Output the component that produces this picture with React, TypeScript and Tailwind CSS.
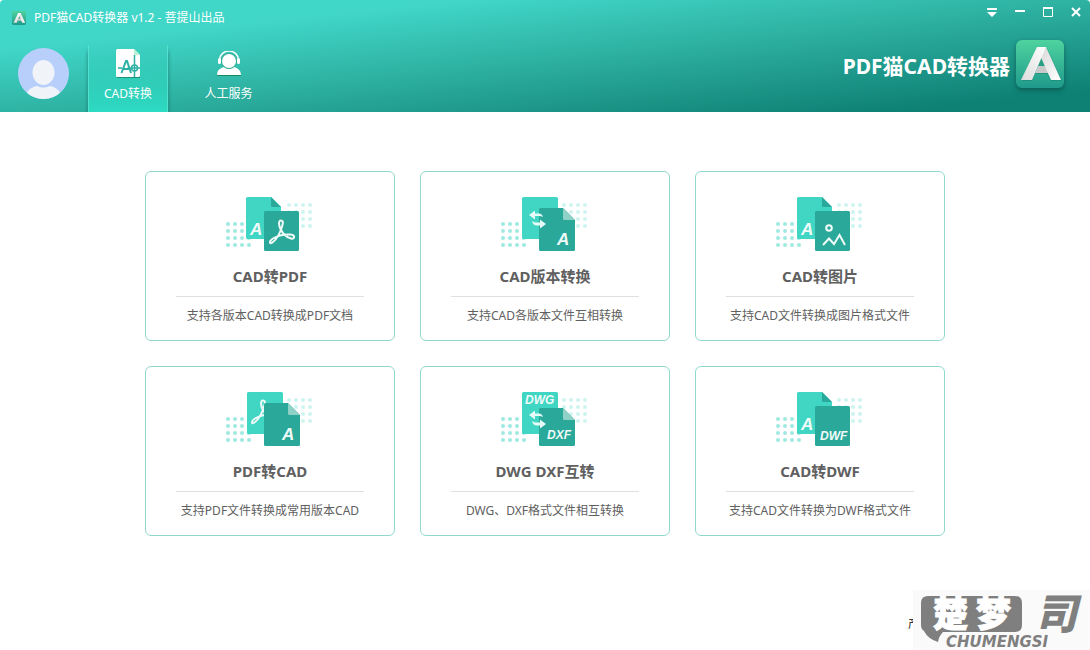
import type { ReactNode } from "react";

const LIGHT = "#40d6c3";
const DARK = "#2aa899";

function AppMark({ className }: { className?: string }) {
  return (
    <svg viewBox="0 0 48 48" className={className} aria-hidden="true">
      <defs>
        <linearGradient id="markBg" x1="0" y1="0" x2="0" y2="1">
          <stop offset="0" stopColor="#4fd39f" />
          <stop offset="1" stopColor="#1f9a8b" />
        </linearGradient>
        <linearGradient id="markLeft" x1="1" y1="0" x2="0" y2="1">
          <stop offset="0" stopColor="#ffffff" />
          <stop offset="1" stopColor="#dcdcdc" />
        </linearGradient>
        <linearGradient id="markRight" x1="0" y1="0" x2="1" y2="1">
          <stop offset="0" stopColor="#d5d5d5" />
          <stop offset="1" stopColor="#ffffff" />
        </linearGradient>
      </defs>
      <rect width="48" height="48" rx="5" fill="url(#markBg)" />
      <path d="M6 41 L21 8 H31 L46 41 H35 L31 34 H19 L16 41 Z" fill="#0c6b60" opacity="0.3" />
      <path d="M19 33 L22 26 H31 L34 33 Z" fill="#c9c9c9" />
      <path d="M21 7 H30 L45 40 H35 L23 13 Z" fill="url(#markRight)" />
      <path d="M21 7 H30 L16 40 H5 Z" fill="url(#markLeft)" />
    </svg>
  );
}

function Avatar() {
  return (
    <svg viewBox="0 0 51 51" className="size-[51px]" aria-hidden="true">
      <defs>
        <clipPath id="avatarClip">
          <circle cx="25.5" cy="25.5" r="25.5" />
        </clipPath>
      </defs>
      <g clipPath="url(#avatarClip)">
        <rect width="51" height="51" fill="#b9cffb" />
        <ellipse cx="25.5" cy="24.5" rx="11" ry="12.5" fill="#f0f4f8" />
        <path d="M7 51 C8 42 14 39 19 38 Q25.500 41 32 38 C37 39 43 42 44 51 Z" fill="#f0f4f8" />
      </g>
    </svg>
  );
}

function CadFileIcon() {
  return (
    <svg viewBox="0 0 24 30" className="h-[30px] w-6" aria-hidden="true">
      <path d="M1 2 H18 L24 8 V29 H1 Z" fill="#1e8f70" />
      <path d="M0 1.500 Q0 0 1.500 0 H18 L24 6 V26.500 Q24 28 22.500 28 H1.500 Q0 28 0 26.500 Z" fill="#fff" />
      <path d="M18 0 L24 6 H18 Z" fill="#b5f2cf" />
      <g fill="none" stroke="#2fb0a4">
        <path d="M2 19 H6 M11.500 19 H24 M18.500 6 V28" strokeWidth="1.500" />
        <path d="M5.500 24 L10 12 H11 L15 24 M7.500 20 H13.500" strokeWidth="2" />
        <circle cx="18.500" cy="19" r="3" strokeWidth="1.500" />
      </g>
    </svg>
  );
}

function ServiceIcon() {
  const body = "M0 24 C0 18 5 17 8 15.500 Q12 20 16 15.500 C19 17 24 18 24 24 Z";
  return (
    <svg viewBox="0 0 24 26" className="h-[26px] w-6" aria-hidden="true">
      <path d={body} transform="translate(0 1)" fill="#178a62" />
      <path d={body} fill="#fff" />
      <circle cx="12" cy="10" r="8" fill="#2fae96" />
      <circle cx="12" cy="10" r="7" fill="#fff" />
      <path d="M2.500 9 A9.500 9 0 0 1 21.500 9" fill="none" stroke="#fff" strokeWidth="1.500" />
      <rect x="1" y="7" width="3" height="6" rx="1.500" fill="#fff" />
      <rect x="20" y="7" width="3" height="6" rx="1.500" fill="#fff" />
    </svg>
  );
}

function Dots({ x, y, opacity }: { x: number; y: number; opacity: number }) {
  const steps = [0, 7, 14, 21];
  return (
    <g fill={LIGHT} opacity={opacity}>
      {steps.map((dy) =>
        steps.map((dx) => <circle key={`${dx}-${dy}`} cx={x + dx} cy={y + dy} r="2" />)
      )}
    </g>
  );
}

function Letters({ x, y, size = 17, children }: { x: number; y: number; size?: number; children: string }) {
  return (
    <text
      x={x}
      y={y}
      fontSize={size}
      fontWeight="700"
      fontStyle="italic"
      fontFamily="'Liberation Sans', sans-serif"
      fill="#f0fbf9"
    >
      {children}
    </text>
  );
}

function Acrobat({ x, y }: { x: number; y: number }) {
  return (
    <path
      transform={`translate(${x} ${y})`}
      d="M13 1.500 C10 1.500 11 7 12.500 10 C15 15 19 18.500 23 19.500 C27 20.500 27.500 16 22.500 15.500 C16 15 9 17 5 19.500 C0.500 22.500 1.500 25.500 4.500 23.500 C9 20.500 13 12 14.500 6 C15.500 2.500 14.500 1.500 13 1.500 Z"
      fill="none"
      stroke="#f0fbf9"
      strokeWidth="2"
    />
  );
}

function Swap({ y = 0 }: { y?: number }) {
  return (
    <g fill="#e6fbf7" transform={`translate(0 ${y})`}>
      <path d="M29 19 L35 14.500 V17.500 H39 Q42 17.500 43 21 Q41 20 39 20 H35 V23.500 Z" />
      <path d="M46 28 L40 23.500 V26.500 H37 Q34 26.500 32 25 Q33 29.500 37 29.500 H40 V32.500 Z" />
    </g>
  );
}

// Folded corner sits either on the back sheet or on the front one
function FoldedBack({ x = 22 }: { x?: number }) {
  return (
    <g transform={`translate(${x} 1)`}>
      <path d="M1.500 0 H25 L35 10 V42 H1.500 Q0 42 0 40.500 V1.500 Q0 0 1.500 0 Z" fill={LIGHT} />
      <path d="M25 0 L35 10 H26.500 Q25 10 25 8.500 Z" fill={DARK} />
    </g>
  );
}

function FoldedFront({ top }: { top: number }) {
  return (
    <>
      <path
        d={`M40.500 ${top} H63 L75 ${top + 12} V53.500 Q75 55 73.500 55 H40.500 Q39 55 39 53.500 V${top + 1.5} Q39 ${top} 40.500 ${top} Z`}
        fill={DARK}
      />
      <path d={`M63 ${top} L75 ${top + 12} H64.500 Q63 ${top + 12} 63 ${top + 10.5} Z`} fill="#8fd0c7" />
    </>
  );
}

function PlainBack() {
  return <rect x="22" y="1" width="36" height="42" rx="1.500" fill={LIGHT} />;
}

function PlainFront({ x = 40 }: { x?: number }) {
  return <rect x={x} y="15" width="35" height="40" rx="1.500" fill={DARK} />;
}

function Artwork({ children }: { children: ReactNode }) {
  return (
    <svg viewBox="0 0 90 56" className="h-14 w-[90px]" aria-hidden="true">
      <Dots x={3} y={28} opacity={0.5} />
      <Dots x={64} y={9} opacity={0.25} />
      {children}
    </svg>
  );
}

const tools = [
  {
    title: "CAD转PDF",
    desc: "支持各版本CAD转换成PDF文档",
    art: (
      <>
        <FoldedBack x={21} />
        <Letters x={25} y={39}>A</Letters>
        <PlainFront x={39} />
        <Acrobat x={43} y={23} />
      </>
    ),
  },
  {
    title: "CAD版本转换",
    desc: "支持CAD各版本文件互相转换",
    art: (
      <>
        <PlainBack />
        <FoldedFront top={12} />
        <Swap />
        <Letters x={57} y={49}>A</Letters>
      </>
    ),
  },
  {
    title: "CAD转图片",
    desc: "支持CAD文件转换成图片格式文件",
    art: (
      <>
        <FoldedBack />
        <Letters x={26} y={39}>A</Letters>
        <PlainFront />
        <g fill="none" stroke="#f0fbf9" strokeWidth="2">
          <circle cx="54" cy="32" r="2.800" />
          <path d="M48 49 L54 42.500 L59 48 L64.500 39 L70 49" />
        </g>
      </>
    ),
  },
  {
    title: "PDF转CAD",
    desc: "支持PDF文件转换成常用版本CAD",
    art: (
      <>
        <PlainBack />
        <Acrobat x={25} y={8} />
        <FoldedFront top={12} />
        <Letters x={57} y={49}>A</Letters>
      </>
    ),
  },
  {
    title: "DWG DXF互转",
    desc: "DWG、DXF格式文件相互转换",
    art: (
      <>
        <PlainBack />
        <Letters x={25} y={13} size={12}>DWG</Letters>
        <FoldedFront top={17} />
        <Swap y={5} />
        <Letters x={47} y={48} size={12}>DXF</Letters>
      </>
    ),
  },
  {
    title: "CAD转DWF",
    desc: "支持CAD文件转换为DWF格式文件",
    art: (
      <>
        <FoldedBack />
        <Letters x={26} y={39}>A</Letters>
        <PlainFront />
        <Letters x={45} y={49} size={12}>DWF</Letters>
      </>
    ),
  },
];

function WindowControls() {
  const button = "flex h-6 w-7 items-center justify-center";
  return (
    <div className="flex">
      <button className={button} aria-label="菜单">
        <svg viewBox="0 0 10 10" className="size-[10px]" fill="#fff">
          <path d="M0 1 H10 V3 H0 Z M0 5 H10 L5 10 Z" />
        </svg>
      </button>
      <button className={button} aria-label="最小化">
        <svg viewBox="0 0 10 10" className="size-[10px]" fill="#fff">
          <path d="M0 3 H10 V5 H0 Z" />
        </svg>
      </button>
      <button className={button} aria-label="最大化">
        <svg viewBox="0 0 10 10" className="size-[10px]" fill="none" stroke="#fff">
          <path d="M0.500 1 H9.500 V9.500 H0.500 Z" />
          <path d="M0 1 H10" strokeWidth="2" />
        </svg>
      </button>
      <button className={button} aria-label="关闭">
        <svg viewBox="0 0 10 10" className="size-[10px]" fill="none" stroke="#fff" strokeWidth="2">
          <path d="M1 1 L9 9 M9 1 L1 9" />
        </svg>
      </button>
    </div>
  );
}

function Header() {
  return (
    <header className="flex h-28 justify-between rounded-t bg-[linear-gradient(174deg,#40d6c8_0%,#40d6c8_22%,#2fb3a3_50%,#0e8074_91%)] text-white">
      <div className="flex flex-col justify-between">
        <div className="flex h-9 items-center gap-2 pl-3">
          <AppMark className="size-[14px]" />
          <h1 className="text-xs">PDF猫CAD转换器 v1.2 - 菩提山出品</h1>
        </div>
        <nav className="flex pl-[18px]">
          <button className="mb-[13px] self-end" aria-label="账户">
            <Avatar />
          </button>
          <button className="ml-[19px] flex h-[67px] w-20 flex-col items-center border-x border-[#5fe8d4]/70 bg-linear-to-b from-[#2fe0c6]/0 to-[#2edbc3] pt-1 shadow-[0_6px_4px_rgba(0,70,60,0.5)] [clip-path:inset(0_-4px_0_-4px)]">
            <CadFileIcon />
            <span className="mt-[5px] text-xs leading-5">CAD转换</span>
          </button>
          <button className="ml-5 flex h-[67px] w-[81px] flex-col items-center pt-[6px]">
            <ServiceIcon />
            <span className="mt-[7px] text-xs leading-5">人工服务</span>
          </button>
        </nav>
      </div>
      <div className="flex flex-col items-end">
        <WindowControls />
        <div className="mt-4 mr-[26px] flex items-center gap-[6px]">
          <span className="pt-[6px] text-[21px] font-bold">PDF猫CAD转换器</span>
          <AppMark className="size-12 rounded-md shadow-[0_2px_5px_rgba(0,50,45,0.5)]" />
        </div>
      </div>
    </header>
  );
}

function Watermark() {
  return (
    <svg viewBox="0 0 177 60" className="h-[60px] w-[177px] bg-[#fafafa]" role="img" aria-label="楚梦司 CHUMENGSI">
      <path
        d="M15 6 H102 Q109 6 109 13 V35 Q109 42 102 42 H30 Q26 46 25 52 Q15 49 11 41 Q8 39 8 35 V13 Q8 6 15 6 Z"
        fill="#7f7f7f"
      />
      <g fontFamily="'Noto Sans CJK SC', sans-serif" fontWeight="900" fontSize="35" fill="#fff" stroke="#fff">
        <text x="20" y="37">楚</text>
        <text x="63" y="37">梦</text>
      </g>
      <text
        x="122"
        y="39"
        fontSize="42"
        fontWeight="900"
        fontStyle="italic"
        fontFamily="'Noto Sans CJK SC', sans-serif"
        fill="#7f7f7f"
      >
        司
      </text>
      <text
        x="33"
        y="57"
        fontSize="15"
        fontWeight="700"
        fontStyle="italic"
        fontFamily="'DejaVu Sans', sans-serif"
        fill="#7f7f7f"
      >
        CHUMENGSI
      </text>
    </svg>
  );
}

export default function App() {
  return (
    <div className="flex min-h-screen flex-col bg-white font-['Noto_Sans','Noto_Sans_CJK_SC',sans-serif]">
      <Header />
      <main className="mx-auto grid w-full max-w-[800px] grid-cols-3 gap-[25px] pt-[59px]">
        {tools.map((tool) => (
          <button
            key={tool.title}
            className="flex h-[170px] flex-col items-center rounded-md border border-[#8fd9cc] px-[30px] pt-6 text-[#606060]"
          >
            <Artwork>{tool.art}</Artwork>
            <span className="mt-[14px] text-[15px] leading-5 font-bold">{tool.title}</span>
            <span className="mt-[10px] w-full border-t border-[#e0e0e0]" />
            <span className="mt-[9px] text-xs leading-5 whitespace-nowrap">{tool.desc}</span>
          </button>
        ))}
      </main>
      <footer className="mt-auto flex items-center justify-end">
        <span className="mt-2 w-[5px] overflow-hidden text-xs text-[#333]">产</span>
        <Watermark />
      </footer>
    </div>
  );
}
